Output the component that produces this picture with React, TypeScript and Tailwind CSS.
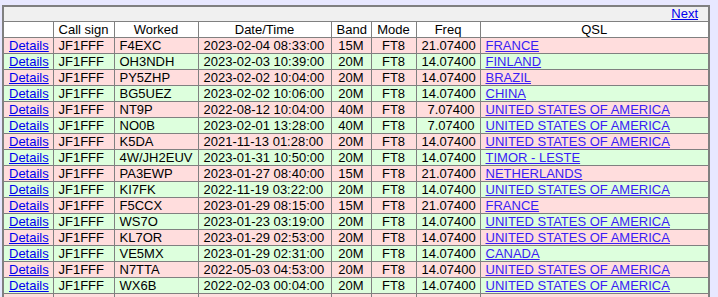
const rows = [
  ["F4EXC", "2023-02-04 08:33:00", "15M", "21.07400", "FRANCE"],
  ["OH3NDH", "2023-02-03 10:39:00", "20M", "14.07400", "FINLAND"],
  ["PY5ZHP", "2023-02-02 10:04:00", "20M", "14.07400", "BRAZIL"],
  ["BG5UEZ", "2023-02-02 10:06:00", "20M", "14.07400", "CHINA"],
  ["NT9P", "2022-08-12 10:04:00", "40M", "7.07400", "UNITED STATES OF AMERICA"],
  ["NO0B", "2023-02-01 13:28:00", "40M", "7.07400", "UNITED STATES OF AMERICA"],
  ["K5DA", "2021-11-13 01:28:00", "20M", "14.07400", "UNITED STATES OF AMERICA"],
  ["4W/JH2EUV", "2023-01-31 10:50:00", "20M", "14.07400", "TIMOR - LESTE"],
  ["PA3EWP", "2023-01-27 08:40:00", "15M", "21.07400", "NETHERLANDS"],
  ["KI7FK", "2022-11-19 03:22:00", "20M", "14.07400", "UNITED STATES OF AMERICA"],
  ["F5CCX", "2023-01-29 08:15:00", "15M", "21.07400", "FRANCE"],
  ["WS7O", "2023-01-23 03:19:00", "20M", "14.07400", "UNITED STATES OF AMERICA"],
  ["KL7OR", "2023-01-29 02:53:00", "20M", "14.07400", "UNITED STATES OF AMERICA"],
  ["VE5MX", "2023-01-29 02:31:00", "20M", "14.07400", "CANADA"],
  ["N7TTA", "2022-05-03 04:53:00", "20M", "14.07400", "UNITED STATES OF AMERICA"],
  ["WX6B", "2022-02-03 00:04:00", "20M", "14.07400", "UNITED STATES OF AMERICA"],
  ["OZ1AAB", "2022-01-30 07:40:00", "15M", "21.07400", "DENMARK"],
];

const td = "border border-[#808080] px-[5px] py-0 leading-[15px] whitespace-nowrap";

export default function App() {
  return (
    <div className="h-screen overflow-hidden bg-[#e8e8ff] pl-[2px] pt-[5px] font-['Liberation_Sans',Arial,sans-serif] text-[13px] text-black">
      <table className="w-[708px] table-fixed border-collapse border-2 border-[#808080]">
        <colgroup>
          <col className="w-[50px]" />
          <col className="w-[61px]" />
          <col className="w-[84px]" />
          <col className="w-[133px]" />
          <col className="w-[40px]" />
          <col className="w-[45px]" />
          <col className="w-[64px]" />
          <col />
        </colgroup>
        <thead>
          <tr className="bg-[#f0f0f0]">
            <td colSpan={8} className="border border-[#808080] py-0 pr-[10px] text-right leading-[14px]">
              <a href="#" className="text-[#0000ee] underline">Next</a>
            </td>
          </tr>
          <tr className="bg-white">
            <th className={td + " font-normal"}></th>
            <th className={td + " font-normal text-center"}>Call sign</th>
            <th className={td + " font-normal text-center"}>Worked</th>
            <th className={td + " font-normal text-center"}>Date/Time</th>
            <th className={td + " font-normal text-center"}>Band</th>
            <th className={td + " font-normal text-center"}>Mode</th>
            <th className={td + " font-normal text-center"}>Freq</th>
            <th className={td + " font-normal text-center"}>QSL</th>
          </tr>
        </thead>
        <tbody>
          {rows.map((r, i) => (
            <tr key={i} className={i % 2 === 0 ? "bg-[#ffdddd]" : "bg-[#ddffdd]"}>
              <td className={td}>
                <a href="#" className="text-[#0000ee] underline">Details</a>
              </td>
              <td className={td}>JF1FFF</td>
              <td className={td}>{r[0]}</td>
              <td className={td}>{r[1]}</td>
              <td className={td + " text-center"}>{r[2]}</td>
              <td className={td + " text-center"}>FT8</td>
              <td className={td + " text-right"}>{r[3]}</td>
              <td className={td}>
                <a href="#" className="text-[#3a1cf5] underline">{r[4]}</a>
              </td>
            </tr>
          ))}
        </tbody>
      </table>
    </div>
  );
}
